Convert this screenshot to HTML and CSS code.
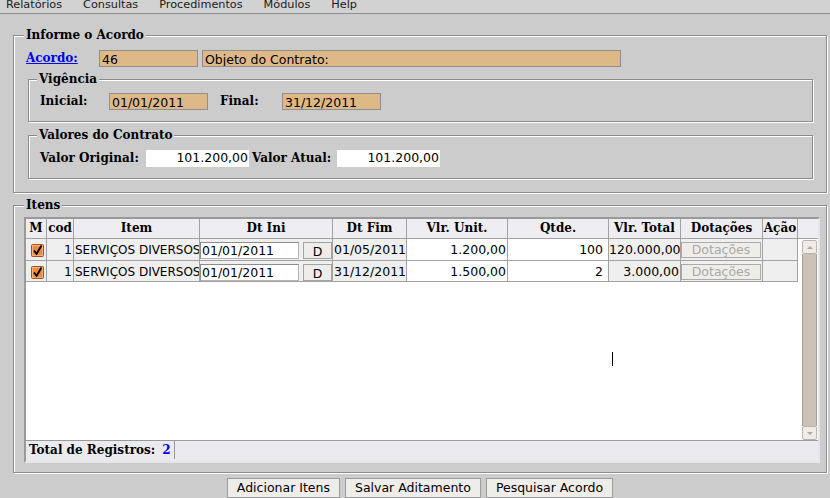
FILE: index.html
```html
<!DOCTYPE html>
<html lang="pt-BR">
<head>
<meta charset="utf-8">
<title>Aditamento de Acordo</title>
<link rel="stylesheet" href="styles.css">
</head>
<body>
<nav class="menubar">
  <span>Relatórios</span>
  <span>Consultas</span>
  <span>Procedimentos</span>
  <span>Módulos</span>
  <span>Help</span>
</nav>
<div class="page">
  <fieldset class="fs fs-main">
    <legend class="lg-main">Informe o Acordo</legend>
    <div class="row">
      <a class="lbl link" href="#">Acordo:</a>
      <span class="field w99">46</span>
      <span class="field w-obj">Objeto do Contrato:</span>
    </div>
    <fieldset class="fs fs-sub fs-vig">
      <legend class="lg-sub">Vigência</legend>
      <div class="row">
        <span class="lbl w-ini">Inicial:</span>
        <span class="field w99">01/01/2011</span>
        <span class="lbl w-fin">Final:</span>
        <span class="field w99">31/12/2011</span>
      </div>
    </fieldset>
    <fieldset class="fs fs-sub fs-val">
      <legend class="lg-sub">Valores do Contrato</legend>
      <div class="row">
        <span class="lbl w-orig">Valor Original:</span>
        <span class="money">101.200,00</span>
        <span class="lbl w-atual">Valor Atual:</span>
        <span class="money">101.200,00</span>
      </div>
    </fieldset>
  </fieldset>

  <fieldset class="fs fs-itens">
    <legend class="lg-itens">Itens</legend>
    <div class="grid">
      <div class="cols head">
        <div class="hc">M</div>
        <div class="hc">cod</div>
        <div class="hc">Item</div>
        <div class="hc">Dt Ini</div>
        <div class="hc">Dt Fim</div>
        <div class="hc">Vlr. Unit.</div>
        <div class="hc">Qtde.</div>
        <div class="hc">Vlr. Total</div>
        <div class="hc">Dotações</div>
        <div class="hc">Ação</div>
        <div class="hc hc-last"></div>
      </div>
      <div class="grid-body">
        <div class="rows">
          <div class="cols drow">
            <div class="dc dc-check"><svg class="chk" width="13" height="13" viewBox="0 0 13 13"><rect x="0.5" y="0.5" width="12" height="12" rx="1" fill="#f08a3c" stroke="#a4511a"/><rect x="1.5" y="1.5" width="10" height="10" fill="none" stroke="#f8b27a"/><path d="M3 6.5 L5.6 9.8 L10.5 1.5" fill="none" stroke="#000" stroke-width="1.8"/></svg></div>
            <div class="dc num">1</div>
            <div class="dc dc-item">SERVIÇOS DIVERSOS</div>
            <div class="dc dc-date"><span class="date-in">01/01/2011</span><span class="btn-d">D</span></div>
            <div class="dc">01/05/2011</div>
            <div class="dc num white">1.200,00</div>
            <div class="dc num white qt">100</div>
            <div class="dc num">120.000,00</div>
            <div class="dc dc-dot"><span class="btn-dot">Dotações</span></div>
            <div class="dc"></div>
          </div>
          <div class="cols drow">
            <div class="dc dc-check"><svg class="chk" width="13" height="13" viewBox="0 0 13 13"><rect x="0.5" y="0.5" width="12" height="12" rx="1" fill="#f08a3c" stroke="#a4511a"/><rect x="1.5" y="1.5" width="10" height="10" fill="none" stroke="#f8b27a"/><path d="M3 6.5 L5.6 9.8 L10.5 1.5" fill="none" stroke="#000" stroke-width="1.8"/></svg></div>
            <div class="dc num">1</div>
            <div class="dc dc-item">SERVIÇOS DIVERSOS</div>
            <div class="dc dc-date"><span class="date-in">01/01/2011</span><span class="btn-d">D</span></div>
            <div class="dc">31/12/2011</div>
            <div class="dc num white">1.500,00</div>
            <div class="dc num white qt">2</div>
            <div class="dc num">3.000,00</div>
            <div class="dc dc-dot"><span class="btn-dot">Dotações</span></div>
            <div class="dc"></div>
          </div>
        </div>
        <div class="vscroll">
          <span class="sb-btn"><span class="tri-up"></span></span>
          <span class="sb-track"></span>
          <span class="sb-btn"><span class="tri-down"></span></span>
        </div>
        <span class="caret"></span>
      </div>
      <div class="grid-foot">
        <span class="foot-count">Total de Registros:<b class="count">2</b></span>
      </div>
    </div>
  </fieldset>

  <div class="actions">
    <button type="button" class="btn">Adicionar Itens</button>
    <button type="button" class="btn">Salvar Aditamento</button>
    <button type="button" class="btn">Pesquisar Acordo</button>
  </div>
</div>
</body>
</html>
```

FILE: styles.css
```css
* { box-sizing: border-box; }

html, body { margin: 0; padding: 0; }

body {
  width: 830px;
  height: 498px;
  overflow: hidden;
  background: #cccccc;
  font-family: "DejaVu Sans", "Liberation Sans", sans-serif;
  font-size: 12.5px;
  color: #000;
}

/* ---------- menu ---------- */
.menubar {
  height: 14px;
  background: #d2d2d2;
  border-bottom: 1px solid #8e8e8e;
  display: flex;
  gap: 21px;
  padding-left: 6px;
  font-size: 11.25px;
  line-height: 10px;
  color: #1a1a1a;
  overflow: hidden;
}

/* ---------- fieldsets ---------- */
.fs {
  margin: 0;
  min-width: 0;
  border: 1px solid #8c8c8c;
  box-shadow: inset 1px 1px 0 #ffffff, 1px 1px 0 #ffffff;
}

.fs legend {
  font: bold 12px/15px "DejaVu Serif", "Liberation Serif", serif;
  padding: 0 2px;
  background: #cccccc;
}

.fs-main {
  margin: 14px 0 0 13px;
  width: 814px;
  padding: 7px 12px 13px 12px;
}
.lg-main { margin-left: -2px; }

.fs-sub {
  margin-left: 2px;
  width: 785px;
  padding: 6px 11px 11px 11px;
}
.lg-sub { margin-left: -3px; }
.fs-vig { margin-top: 5px; }
.fs-val { margin-top: 6px; padding-top: 7px; }

.fs-itens {
  margin: 5px 0 0 13px;
  width: 814px;
  padding: 4px 10px 9px 10px;
}
.lg-itens { margin-left: 0; }

/* ---------- form rows ---------- */
.row {
  display: flex;
  align-items: center;
  height: 17px;
}

.lbl {
  font: bold 12px/15px "DejaVu Serif", "Liberation Serif", serif;
  white-space: nowrap;
}

.link {
  width: 73px;
  color: #0000ee;
  text-decoration: underline;
}

.field {
  height: 17px;
  border: 1px solid #8f8f8f;
  background: #deb887;
  padding: 2px 2px 0 2px;
  line-height: 13px;
  white-space: nowrap;
  overflow: hidden;
}
.w99 { width: 99px; }
.w-obj { width: 419px; margin-left: 4px; }
.w-ini { width: 69px; }
.w-fin { width: 62px; margin-left: 12px; }
.w-orig { width: 106px; }
.w-atual { width: 85px; margin-left: 3px; }

.money {
  width: 103px;
  height: 17px;
  background: #ffffff;
  text-align: right;
  padding-right: 1px;
  line-height: 16px;
}

/* ---------- grid ---------- */
.grid {
  width: 796px;
  border-style: solid;
  border-width: 2px;
  border-color: #9a9a9a #e6e6e6 #e6e6e6 #9a9a9a;
}

.cols {
  display: grid;
  grid-template-columns: 21px 27px 126px 133px 74px 101px 101px 72px 82px 35px;
}

.head {
  grid-template-columns: 21px 27px 126px 133px 74px 101px 101px 72px 82px 35px 1fr;
  height: 20px;
  background: #eeeef2;
}

.hc {
  border-right: 1px solid #a2a2a2;
  border-bottom: 1px solid #a2a2a2;
  font: bold 12px/19px "DejaVu Serif", "Liberation Serif", serif;
  text-align: center;
  white-space: nowrap;
  overflow: hidden;
}
.hc-last { border-right: none; }

.grid-body {
  position: relative;
  display: flex;
  height: 201px;
  background: #ffffff;
}

.rows { width: 772px; }

.drow { height: 21.5px; }

.dc {
  background: #efefef;
  border-right: 1px solid #a2a2a2;
  border-bottom: 1px solid #a2a2a2;
  padding: 1px 0 0 1px;
  line-height: 20px;
  white-space: nowrap;
  overflow: hidden;
}
.dc.white { background: #ffffff; }
.dc.num { text-align: right; padding-right: 1px; padding-left: 0; }
.dc.qt { padding-right: 5px; }
.dc-item { font-size: 12px; }

.dc-check { padding: 5px 0 0 5px; line-height: 0; }
.chk { display: block; }

.dc-date {
  display: flex;
  align-items: flex-start;
  padding: 3px 0 0 0;
}
.date-in {
  width: 99px;
  height: 17px;
  background: #ffffff;
  border: 1px solid #8c8c8c;
  border-right-color: #b4b4b4;
  border-bottom-color: #b4b4b4;
  padding-left: 1px;
  line-height: 14px;
  padding-top: 1px;
}
.btn-d {
  width: 29px;
  height: 17px;
  margin-left: 4px;
  background: #efedea;
  border: 1px solid #a3a3a3;
  text-align: center;
  line-height: 15px;
  padding-top: 1px;
}

.dc-dot { padding: 3px 0 0 0; }
.btn-dot {
  display: block;
  width: 80px;
  height: 16px;
  background: #eeedea;
  border: 1px solid #ababab;
  color: #a9a9a9;
  text-align: center;
  line-height: 14px;
}

/* scrollbar */
.vscroll {
  display: flex;
  flex-direction: column;
  width: 15px;
  height: 200px;
  margin: 1px 0 0 4px;
}
.sb-btn {
  height: 14px;
  background: #efebe6;
  border: 1px solid #bcb3a9;
  border-radius: 2px;
  display: flex;
  align-items: center;
  justify-content: center;
}
.sb-track {
  flex: 1;
  background: #cbc1b6;
  border-left: 1px solid #a69d93;
  border-right: 1px solid #a69d93;
}
.tri-up {
  width: 0; height: 0;
  border-left: 3px solid transparent;
  border-right: 3px solid transparent;
  border-bottom: 3px solid #b0a89f;
}
.tri-down {
  width: 0; height: 0;
  border-left: 3px solid transparent;
  border-right: 3px solid transparent;
  border-top: 3px solid #b0a89f;
}

.caret {
  position: absolute;
  left: 586px;
  top: 113px;
  width: 1px;
  height: 14px;
  background: #000;
}

.grid-foot {
  height: 21px;
  border-top: 1px solid #9a9a9a;
  background: #ebebef;
  padding-left: 3px;
}
.foot-count {
  display: inline-block;
  font: bold 12px/18px "DejaVu Serif", "Liberation Serif", serif;
  padding-right: 3px;
  border-right: 1px solid #9a9a9a;
}
.count { color: #0000ee; margin-left: 7px; }

/* ---------- actions ---------- */
.actions {
  display: flex;
  justify-content: center;
  gap: 5px;
  margin-top: 5px;
  padding-left: 10px;
}
.btn {
  height: 20px;
  margin: 0;
  padding: 0 9px;
  background: #efedea;
  border: 1px solid #9b9b9b;
  border-radius: 0;
  font-family: "DejaVu Sans", "Liberation Sans", sans-serif;
  font-size: 12.5px;
  line-height: 18px;
  color: #000;
}
```
